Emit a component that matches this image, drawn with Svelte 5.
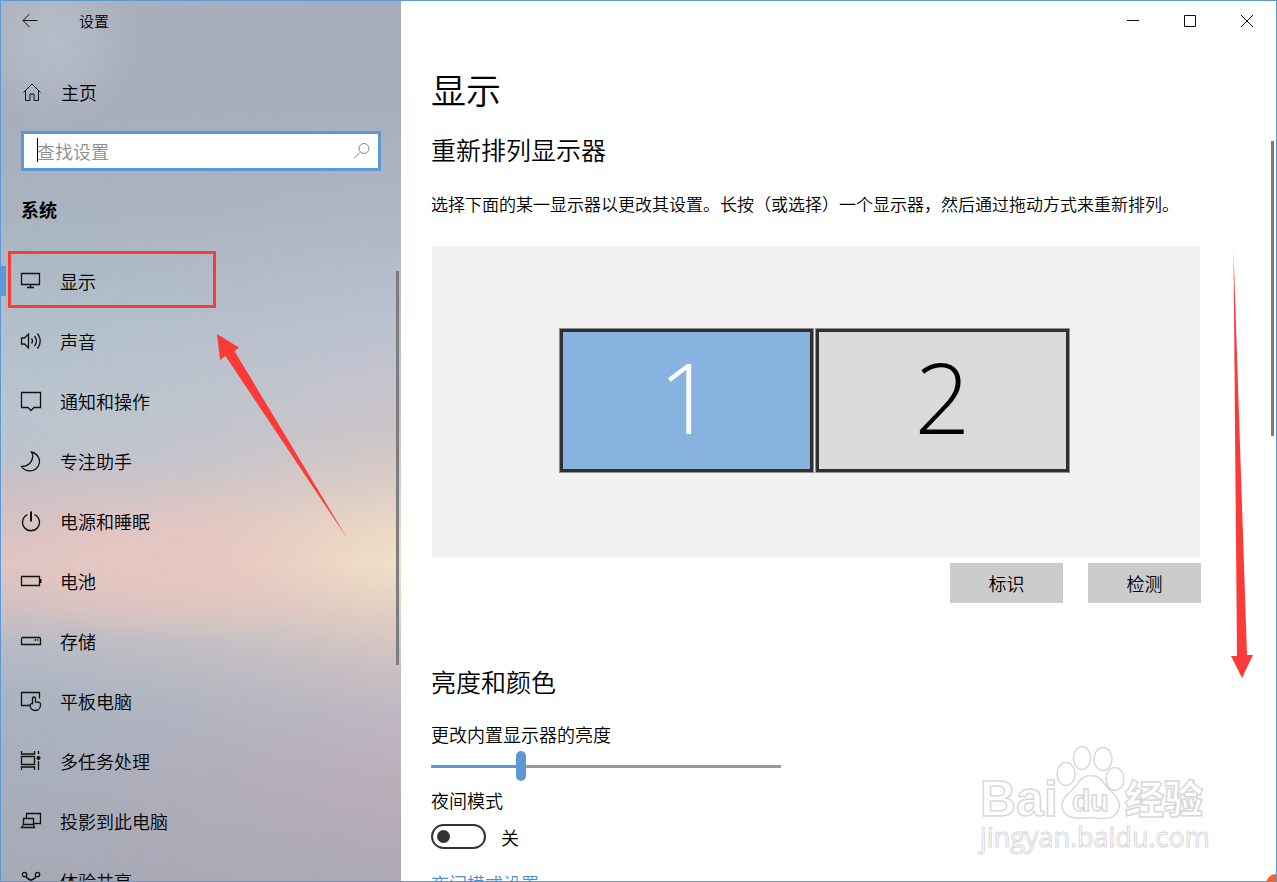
<script lang="ts">
  const items = [
    { id: 'display', label: '显示' },
    { id: 'sound', label: '声音' },
    { id: 'notice', label: '通知和操作' },
    { id: 'focus', label: '专注助手' },
    { id: 'power', label: '电源和睡眠' },
    { id: 'battery', label: '电池' },
    { id: 'storage', label: '存储' },
    { id: 'tablet', label: '平板电脑' },
    { id: 'multitask', label: '多任务处理' },
    { id: 'project', label: '投影到此电脑' },
    { id: 'share', label: '体验共享' }
  ];
  let current = $state('display');
  let brightness = $state(25);
  let night = $state(false);
</script>

<div class="window">
  <aside class="sidebar">
    <header class="titlebar">
      <button class="back" aria-label="返回">
        <svg width="16" height="16" viewBox="0 0 16 16"><path d="M15.500 7.500H1M7.500 1L1 7.500l6.500 6.500" /></svg>
      </button>
      <span class="app-name">设置</span>
    </header>

    <button class="home">
      <svg width="20" height="20" viewBox="0 0 20 20"><path d="M1.500 10.500L10 2l8.500 8.500M3.500 9v9.500h4.500v-6.500h4v6.500h4.500V9" /></svg>
      <span>主页</span>
    </button>

    <div class="search">
      <input type="text" placeholder="查找设置" aria-label="查找设置" />
      <span class="caret"></span>
      <svg width="18" height="18" viewBox="0 0 18 18"><circle cx="11" cy="6.500" r="5" /><path d="M7.500 10L1 16.500" /></svg>
    </div>

    <h2 class="group">系统</h2>

    <nav>
      {#each items as item (item.id)}
        <button class="item" class:active={current === item.id} onclick={() => (current = item.id)}>
          <svg width="22" height="22" viewBox="0 0 22 22">
            {#if item.id === 'display'}
              <path d="M1.500 3.500h18v11h-18zM10.500 14.500v2.500M7 17.500h7" />
            {:else if item.id === 'sound'}
              <path d="M1.500 8v6h3l4 4V4l-4 4zM11.500 8.500q2 2.500 0 5M14.500 6q4 5 0 10M17.500 3.500q5.500 7.500 0 15" />
            {:else if item.id === 'notice'}
              <path d="M1.500 2.500h19v15h-6.500l-3 3l-3-3H1.500z" />
            {:else if item.id === 'focus'}
              <path d="M11.500 2c3 5 0 14.500-10 14.500c4 6 13.500 6 17-1c3-6-1-12-7-13.500z" />
            {:else if item.id === 'power'}
              <path d="M7.500 4.500A8.500 8.500 0 1 0 14.500 4.500" /><path class="bold" d="M11 1.500v10" />
            {:else if item.id === 'battery'}
              <path d="M1.500 6.500h18v9h-18z" /><path class="bold" d="M20.500 9v4" />
            {:else if item.id === 'storage'}
              <path d="M2.500 7.500h17l1 1v6h-19v-6z" /><path d="M14.500 10h1.500M17 10h1.500" />
            {:else if item.id === 'tablet'}
              <path d="M9.500 15.500h-8v-13h18v6" />
              <path d="M12.500 14.500V8q1.500-2 3 0v4l4 .5q1.500 .5 1 2.500c0 3-2 5.500-5 5.500s-5.500-2-5.500-6l2.500-1.500" />
            {:else if item.id === 'multitask'}
              <path d="M1.500 1v3h13V1M1.500 6.500h13v8h-13zM1.500 20v-3h13v3M18.500 1v3M18.500 11v9" />
              <circle class="dot" cx="18.500" cy="8" r="2" />
            {:else if item.id === 'project'}
              <path d="M6.500 8V3.500h14v10H14M3.500 8.500h10v6h-10zM3.500 14.500l-2 3h13l-1-3" />
            {:else}
              <circle cx="4.500" cy="4.500" r="2.200" /><circle cx="17.500" cy="4.500" r="2.200" />
              <path d="M6 6.500q5 7 10 0M11 10v8" />
            {/if}
          </svg>
          <span>{item.label}</span>
        </button>
      {/each}
    </nav>
    <span class="scroll side-scroll"></span>
  </aside>

  <main>
    <div class="controls">
      <button aria-label="最小化"><svg width="13" height="14" viewBox="0 0 13 14"><path d="M0 6.500h12" /></svg></button>
      <button aria-label="最大化"><svg width="13" height="14" viewBox="0 0 13 14"><path d="M.5 1.500h11v11h-11z" /></svg></button>
      <button aria-label="关闭"><svg width="13" height="14" viewBox="0 0 13 14"><path d="M0 1l12 12M12 1L0 13" /></svg></button>
    </div>

    <div class="content">
      <h1>显示</h1>
      <h2>重新排列显示器</h2>
      <p>选择下面的某一显示器以更改其设置。长按（或选择）一个显示器，然后通过拖动方式来重新排列。</p>

      <div class="canvas">
        <button class="monitor selected">1</button>
        <button class="monitor">2</button>
      </div>
      <div class="actions">
        <button>标识</button>
        <button>检测</button>
      </div>

      <h2 class="second">亮度和颜色</h2>
      <label class="field" for="brightness">更改内置显示器的亮度</label>
      <input id="brightness" class="slider" type="range" min="0" max="100" bind:value={brightness} style="--fill: {brightness}%" />
      <label class="field night" for="night">夜间模式</label>
      <div class="toggle-row">
        <input id="night" class="toggle" type="checkbox" role="switch" bind:checked={night} />
        <span>{night ? '开' : '关'}</span>
      </div>
      <a href="#night">夜间模式设置</a>
    </div>
    <span class="scroll main-scroll"></span>
  </main>

  <span class="mark-box"></span>
  <svg class="mark-left" width="132" height="206" viewBox="0 0 132 206">
    <path d="M1 0l22 13.500l-4.500 3.500L131 204L9.500 22l-5.500 4z" />
  </svg>
  <svg class="mark-right" width="24" height="430" viewBox="0 0 24 430">
    <path d="M3.500 0L17 404h6L12 427L1 405h6z" />
  </svg>

  <svg class="watermark" width="236" height="120" viewBox="0 0 236 120">
    <g class="brand">
      <text x="4" y="76" class="bai">Bai</text>
      <ellipse cx="90" cy="34" rx="9" ry="11.500" />
      <ellipse cx="106" cy="18" rx="8.500" ry="11.500" />
      <ellipse cx="127" cy="19" rx="9" ry="11.500" />
      <ellipse cx="139" cy="39" rx="9" ry="11.500" />
      <path d="M115 35.500c10 0 12 7 17 13c7 6 13 12 11 20c-3 11-14 11-28 9c-14 2-26 1-28.500-9c-2-8 4-13 11-20c6-6 7-13 17.500-13z" />
      <text x="96" y="71" class="du">du</text>
      <text x="149" y="73" class="jy">经验</text>
      <text x="4" y="107" class="url">jingyan.baidu.com</text>
    </g>
  </svg>
  <span class="corner"></span>
</div>

<style>
  :global(body) {
    margin: 0;
    overflow: hidden;
  }
  .window {
    position: relative;
    box-sizing: border-box;
    display: grid;
    grid-template-columns: 400px 1fr;
    height: 100vh;
    border: 1px solid #5b99d6;
    background: #fff;
    color: #000;
    overflow: hidden;
    font-family: 'Noto Sans CJK SC', sans-serif;
    font-size: 18px;
    font-weight: 350;
    line-height: 24px;
  }
  button {
    font: inherit;
    color: inherit;
    border: 0;
    padding: 0;
    background: none;
  }
  svg {
    fill: none;
    stroke: #111;
    flex: none;
  }
  h1, h2, p {
    margin: 0;
    font-weight: 350;
  }

  .sidebar {
    position: relative;
    isolation: isolate;
    overflow: hidden;
    display: flex;
    flex-direction: column;
    background:
      radial-gradient(circle at 55px 40px, #c0c6cfaa 0, #c0c6cf77 35px, #c0c6cf00 85px),
      linear-gradient(#a9afbb 0%, #a7aebc 12%, #a9b4c1 24%, #b1bfca 36%, #b9c5cf 46%, #bdc3ce 52%, #cbc0c7 55%, #d8c2c4 60%, #dfc5c3 64%, #d0c0c2 69%, #b8bbc6 73%, #a9b5c1 79%, #a9b0bd 86%, #a7aab6 100%);
  }
  .sidebar::before {
    content: '';
    position: absolute;
    inset: 0;
    z-index: -1;
    background:
      radial-gradient(ellipse 190px 75px at 175px 565px, #e9c3bfcc 0, #e9c3bf00 100%),
      linear-gradient(to right, #abb1bd00, #abb1bd00) no-repeat;
  }
  .sidebar::after {
    content: '';
    position: absolute;
    inset: 0;
    z-index: -2;
    background: linear-gradient(#a6acb9 0%, #a7aebd 12%, #b0b5c5 24%, #bac0cf 36%, #c5c4ce 43%, #cdc4c8 49%, #dccdc6 55%, #ecd8c5 60%, #f1dfc6 64%, #e4d0c3 69%, #cfc1c2 75%, #bfb7c1 81%, #bbadb8 89%, #ada9b6 100%);
    mask-image: linear-gradient(to right, transparent, #0005 45%, #000);
  }
  .sidebar > * {
    flex-shrink: 0;
  }
  .titlebar {
    display: flex;
    align-items: center;
    height: 40px;
    padding-left: 21px;
    font-size: 15px;
  }
  .back {
    display: flex;
    margin-right: 41px;
  }
  .home {
    display: flex;
    align-items: center;
    gap: 19px;
    height: 60px;
    margin-top: 21px;
    padding-left: 21px;
  }
  .search {
    position: relative;
    display: flex;
    align-items: center;
    box-sizing: border-box;
    height: 40px;
    margin: 9px 20px 0;
    padding: 0 7px 0 13px;
    border: 3px solid #5b99d6;
    background: #fff;
  }
  .search input {
    flex: 1;
    min-width: 0;
    border: 0;
    padding: 0;
    outline: 0;
    background: none;
    font: inherit;
  }
  .search input::placeholder {
    color: #8e8e8e;
  }
  .search svg {
    stroke: #888;
  }
  .caret {
    position: absolute;
    left: 13px;
    top: 4px;
    width: 1px;
    height: 24px;
    background: #000;
  }
  .group {
    margin: 26px 0 30px 20px;
    font-size: 18px;
    font-weight: 700;
  }
  nav {
    display: flex;
    flex-direction: column;
  }
  .item {
    position: relative;
    flex: none;
    display: flex;
    align-items: center;
    gap: 18px;
    height: 60px;
    padding-left: 19px;
    text-align: left;
  }
  .item.active::before {
    content: '';
    position: absolute;
    left: 0;
    top: 15px;
    width: 5px;
    height: 30px;
    background: #5b99d6;
  }
  svg .bold {
    stroke-width: 2;
  }
  .item svg {
    stroke-width: 1.3;
  }
  .item .dot {
    fill: #111;
    stroke: none;
  }
  .scroll {
    position: absolute;
    width: 3px;
    background: #7d7d7f;
  }
  .side-scroll {
    right: 2px;
    top: 270px;
    height: 394px;
  }
  .main-scroll {
    right: 2px;
    top: 140px;
    height: 295px;
  }

  main {
    position: relative;
    min-width: 0;
    overflow: hidden;
  }
  .controls {
    display: flex;
    justify-content: flex-end;
    height: 40px;
  }
  .controls button {
    display: grid;
    place-items: center;
    width: 57px;
  }
  .content {
    display: flex;
    flex-direction: column;
    padding: 24px 75px 0 30px;
  }
  h1 {
    font-size: 35px;
    line-height: 48px;
  }
  .content h2 {
    margin-top: 20px;
    font-size: 25px;
    line-height: 32px;
  }
  p {
    margin-top: 27px;
    font-size: 17px;
  }
  .canvas {
    display: flex;
    align-items: center;
    justify-content: center;
    gap: 3px;
    box-sizing: border-box;
    height: 311px;
    margin: 30px 1px 0;
    padding: 0 3px 2px 0;
    background: #f1f1f1;
  }
  .monitor {
    box-sizing: border-box;
    width: 253px;
    height: 143px;
    padding-bottom: 8px;
    border: 3px solid #303030;
    outline: 1px solid #909090;
    background: #dadada;
    font-family: 'Open Sans', sans-serif;
    font-size: 98px;
    font-weight: 300;
    line-height: 129px;
  }
  .monitor.selected {
    background: #88b2df;
    color: #fff;
  }
  .actions {
    display: flex;
    justify-content: flex-end;
    gap: 25px;
    margin-top: 6px;
  }
  .actions button {
    width: 113px;
    height: 40px;
    background: #ccc;
  }
  .content .second {
    margin-top: 62px;
  }
  .field {
    margin-top: 25px;
  }
  .slider {
    appearance: none;
    width: 350px;
    height: 30px;
    margin: 5px 0 0;
    background: linear-gradient(to right, #5b99d6 var(--fill), #999 var(--fill)) center / 100% 3px no-repeat;
  }
  .slider::-webkit-slider-thumb {
    appearance: none;
    width: 10px;
    height: 30px;
    border-radius: 5px;
    background: #5b99d6;
  }
  .night {
    margin-top: 7px;
  }
  .toggle-row {
    display: flex;
    align-items: center;
    gap: 15px;
    margin-top: 12px;
  }
  .toggle {
    appearance: none;
    display: flex;
    align-items: center;
    box-sizing: border-box;
    width: 55px;
    height: 25px;
    margin: 0;
    padding: 0 4px;
    border: 2px solid #333;
    border-radius: 13px;
  }
  .toggle::before {
    content: '';
    width: 13px;
    height: 13px;
    border-radius: 50%;
    background: #333;
  }
  .toggle:checked {
    justify-content: flex-end;
  }
  .content a {
    margin-top: 22px;
    color: #4a90d0;
    text-decoration: none;
  }

  .mark-box {
    position: absolute;
    left: 7px;
    top: 250px;
    box-sizing: border-box;
    width: 208px;
    height: 57px;
    border: 3px solid #fc3a38;
    pointer-events: none;
  }
  .mark-left,
  .mark-right {
    position: absolute;
    fill: #fc3a38;
    stroke: none;
    pointer-events: none;
  }
  .mark-left {
    left: 215px;
    top: 333px;
  }
  .mark-right {
    left: 1229px;
    top: 250px;
  }
  .watermark {
    position: absolute;
    right: 64px;
    bottom: 21px;
    pointer-events: none;
  }
  .brand {
    fill: #fff;
    stroke: #d8d8d8;
    stroke-width: 1.5;
  }
  .bai, .du {
    font-family: 'Liberation Sans', sans-serif;
    font-weight: 700;
    font-size: 50px;
  }
  .du {
    font-size: 30px;
  }
  .jy {
    font-weight: 900;
    font-size: 39px;
  }
  .url {
    font-family: 'Open Sans', sans-serif;
    font-weight: 400;
    font-size: 27px;
    stroke-width: 1;
  }
  .corner {
    position: absolute;
    right: -10px;
    bottom: -13px;
    width: 20px;
    height: 20px;
    border-radius: 50%;
    background: #f4642a;
  }
</style>
